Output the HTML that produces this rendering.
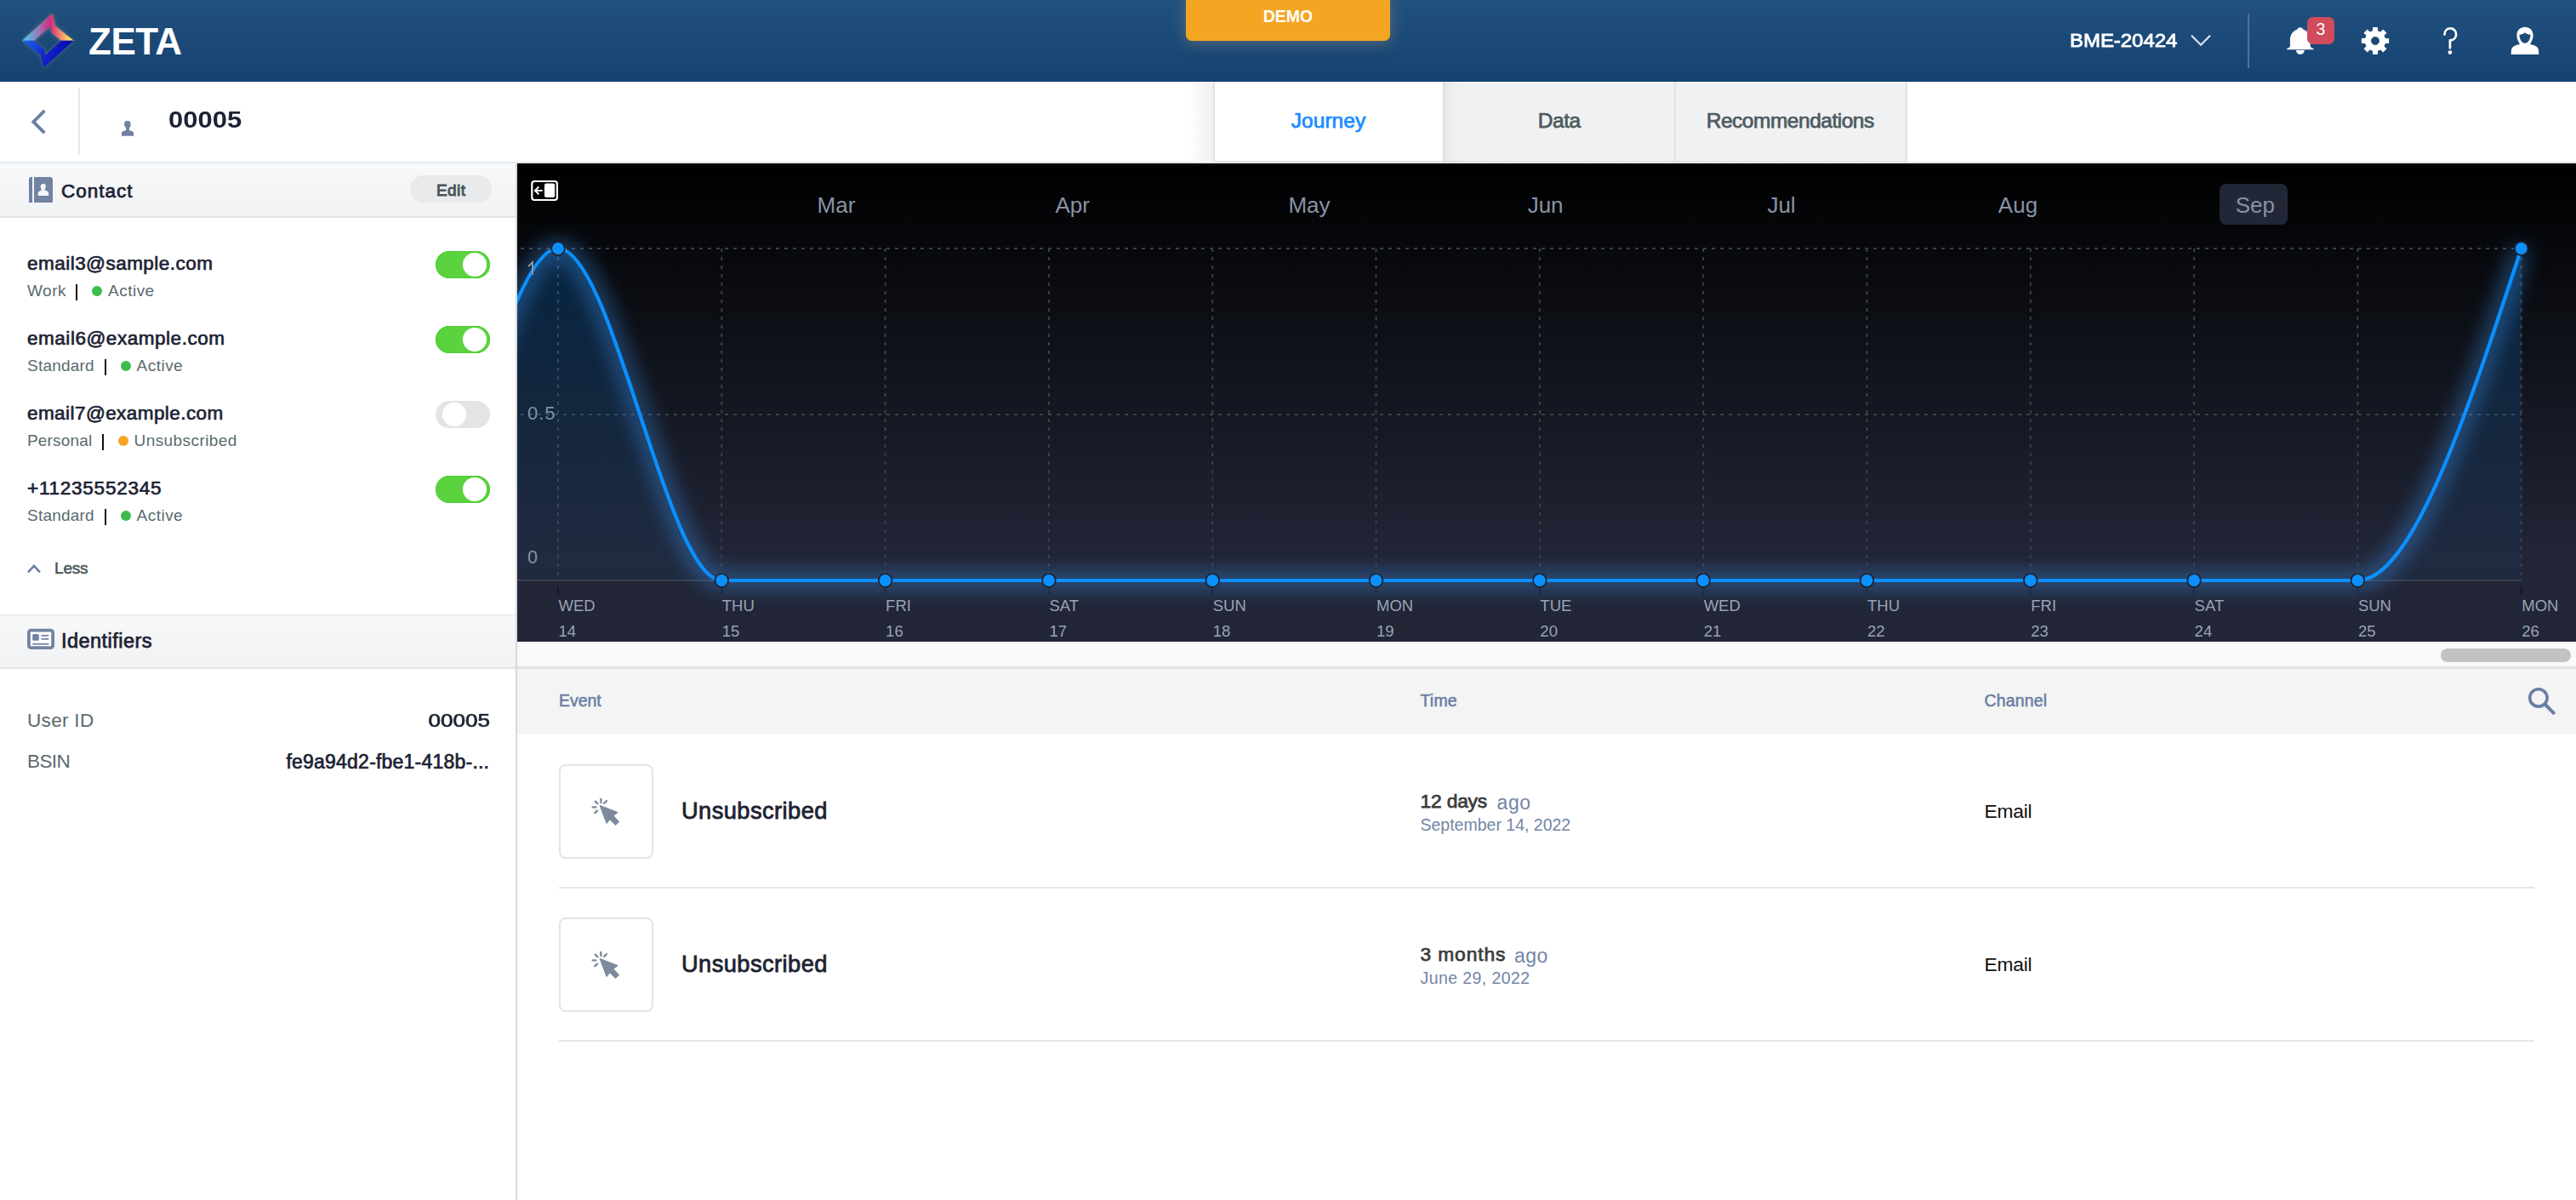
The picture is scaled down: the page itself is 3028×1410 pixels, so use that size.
<!DOCTYPE html>
<html><head><meta charset="utf-8"><title>Zeta</title>
<style>
html,body{margin:0;padding:0;}
body{width:3028px;height:1410px;position:relative;overflow:hidden;background:#fff;font-family:"Liberation Sans", sans-serif;}
.t{position:absolute;white-space:nowrap;}
.r{position:absolute;display:block;}
</style></head><body>
<div class="r" style="left:0px;top:0px;width:3028px;height:95px;background:linear-gradient(180deg,#21517f 0%,#164271 100%);"></div>
<div class="r" style="left:0px;top:95px;width:3028px;height:1px;background:#0b3a6d;"></div>
<svg class="r" style="left:20px;top:10px" width="75" height="75" viewBox="0 0 1200 1200">
<defs>
<linearGradient id="lgTop" x1="95" y1="0" x2="1065" y2="0" gradientUnits="userSpaceOnUse">
<stop offset="0" stop-color="#3fd4ff"/><stop offset="0.32" stop-color="#9a78b8"/><stop offset="0.55" stop-color="#d42a7c"/><stop offset="0.75" stop-color="#f08a70"/><stop offset="1" stop-color="#ffff55"/></linearGradient>
<linearGradient id="lgBot" x1="95" y1="605" x2="1065" y2="900" gradientUnits="userSpaceOnUse">
<stop offset="0" stop-color="#1d6ae8"/><stop offset="0.5" stop-color="#1024c8"/><stop offset="1" stop-color="#0800a8"/></linearGradient>
<filter id="lglow" x="-20%" y="-20%" width="140%" height="140%"><feGaussianBlur stdDeviation="34"/></filter>
</defs>
<g filter="url(#lglow)" opacity="0.35"><polygon points="95,605 665,95 715,325 1065,605 830,605 655,455 625,335 320,605" fill="#f0e6a0"/><polygon points="95,605 320,605 510,770 535,880 830,605 1065,605 500,1110 445,880" fill="#c8c8a0"/></g>
<polygon points="95,605 665,95 715,325 1065,605 830,605 655,455 625,335 320,605" fill="url(#lgTop)"/>
<polygon points="95,605 320,605 510,770 535,880 830,605 1065,605 500,1110 445,880" fill="url(#lgBot)"/>
</svg>
<div class="t" style="left:104.00px;top:26.75px;font-size:44px;line-height:44px;font-weight:700;color:#fff;letter-spacing:-0.5px;">ZETA</div>
<div class="r" style="left:1394px;top:0px;width:240px;height:48px;background:#f4a623;border-radius:0 0 7px 7px;box-shadow:0 2px 16px 2px rgba(150,140,120,0.42);"></div>
<div class="t" style="left:1414.00px;width:200px;text-align:center;top:9.99px;font-size:19.5px;line-height:19.5px;font-weight:700;color:#fff;">DEMO</div>
<div class="t" style="left:2433.00px;top:36.50px;font-size:22.2px;line-height:22.2px;font-weight:400;color:#fff;-webkit-text-stroke:0.85px #fff;transform:scaleX(1.0783);transform-origin:0 50%;">BME-20424</div>
<svg class="r" style="left:2570px;top:35px" width="34" height="26" viewBox="2570 35 34 26"><polyline points="2576,41.7 2587,52.7 2598,41.7" fill="none" stroke="#d9e2ec" stroke-width="2.3"/></svg>
<div class="r" style="left:2642px;top:16px;width:2px;height:64px;background:#4f7399;"></div>
<svg class="r" style="left:2680px;top:20px" width="150" height="50" viewBox="2680 20 150 50">
<path d="M2703.9,32.2 c1.6,0 2.6,0.9 3.2,2.2 c5.2,1.6 8.6,6.2 8.6,12.8 l0,6.6 c0,1.6 1.2,2.6 4.2,3.6 l0,0.9 l-32,0 l0,-0.9 c3,-1 4,-2 4,-3.6 l0,-6.6 c0,-6.6 3.4,-11.2 8.6,-12.8 c0.6,-1.3 1.6,-2.2 3.4,-2.2 z" fill="#fff"/>
<path d="M2699,59 l9.8,0 c0,2.8 -2.2,4.9 -4.9,4.9 c-2.7,0 -4.9,-2.1 -4.9,-4.9 z" fill="#fff"/>
<g transform="translate(2792,47.9)">
<path d="M-3,-16 h6 v4.3 a12,12 0 0 1 3.2,1.35 l3.05,-3.05 l4.25,4.25 l-3.05,3.05 a12,12 0 0 1 1.35,3.2 h4.3 v6 h-4.3 a12,12 0 0 1 -1.35,3.2 l3.05,3.05 l-4.25,4.25 l-3.05,-3.05 a12,12 0 0 1 -3.2,1.35 v4.3 h-6 v-4.3 a12,12 0 0 1 -3.2,-1.35 l-3.05,3.05 l-4.25,-4.25 l3.05,-3.05 a12,12 0 0 1 -1.35,-3.2 h-4.3 v-6 h4.3 a12,12 0 0 1 1.35,-3.2 l-3.05,-3.05 l4.25,-4.25 l3.05,3.05 a12,12 0 0 1 3.2,-1.35 z M0,-4.9 a4.9,4.9 0 1 0 0.01,0 z" fill="#fff" fill-rule="evenodd"/>
</g>
</svg>
<div class="r" style="left:2712px;top:20px;width:32px;height:32px;background:#d04b5c;border-radius:6.5px;"></div>
<div class="t" style="left:2713.00px;width:30px;text-align:center;top:24.59px;font-size:19.5px;line-height:19.5px;font-weight:400;color:#fff;">3</div>
<svg class="r" style="left:2860px;top:20px" width="40" height="50" viewBox="2860 20 40 50">
<path d="M2873.5,40.6 c0,-4.2 2.9,-7.2 6.8,-7.2 c3.9,0 6.8,3 6.8,7 c0,3.6 -2.6,6.3 -6.3,6.9 l-0.9,0.2 l0,9" fill="none" stroke="#fff" stroke-width="2.7" stroke-linecap="round"/>
<circle cx="2879.9" cy="61.6" r="2.4" fill="#fff"/>
</svg>
<svg class="r" style="left:2945px;top:25px" width="45" height="45" viewBox="2945 25 45 45">
<path d="M2968,31.7 c5.2,0 9.6,3.6 9.6,9.5 c0,2.5 -0.5,4.6 -1.4,6.5 c-0.8,1.6 -1.4,2.9 -2.2,4.2 c4.6,1 10.2,2.2 10.2,8.2 l0,3.9 l-32.4,0 l0,-3.9 c0,-6 5.6,-7.2 10.2,-8.2 c-0.8,-1.3 -1.4,-2.6 -2.2,-4.2 c-0.9,-1.9 -1.4,-4 -1.4,-6.5 c0,-5.9 4.4,-9.5 9.6,-9.5 z M2968,38.2 c-1.6,1.6 -4,2.2 -6.6,2.6 c0.2,4.5 2.4,10 6.6,10 c4.2,0 6.4,-5.5 6.6,-10 c-2.6,-0.4 -5,-1 -6.6,-2.6 z" fill="#fff" fill-rule="evenodd"/>
</svg>
<div class="r" style="left:0px;top:96px;width:3028px;height:94px;background:#fff;"></div>
<div class="r" style="left:0px;top:190px;width:3028px;height:2px;background:#e3eaee;"></div>
<svg class="r" style="left:30px;top:124px" width="30" height="40" viewBox="30 124 30 40"><polyline points="52.3,130.2 39.3,143.2 52.3,156.2" fill="none" stroke="#6b7ea3" stroke-width="3.8"/></svg>
<div class="r" style="left:92px;top:103px;width:2px;height:79px;background:#e3e9ee;"></div>
<svg class="r" style="left:138px;top:138px" width="24" height="26" viewBox="138 138 24 26">
<path d="M146.8,143 c0.6,-0.9 1.8,-1 3.2,-1 c1.6,0 3.2,0.5 3.4,2.2 l0.2,3 c-0.1,1.4 -0.6,2.4 -1.6,2.8 l0,2.9 l3.4,1.4 c1.1,0.6 1.7,1.2 1.7,2 l0,3.45 l-14.2,0 l0,-3.45 c0,-0.8 0.6,-1.4 1.7,-2 l3.4,-1.4 l0,-2.9 c-1,-0.4 -1.6,-1.6 -1.6,-2.8 c-0.4,-0.3 -0.5,-1 -0.2,-1.5 c-0.3,-0.3 -0.3,-1 0,-1.4 z" fill="#7282a3"/>
</svg>
<div class="t" style="left:198.00px;top:128.14px;font-size:27px;line-height:27px;font-weight:700;color:#1c2333;transform:scaleX(1.1479);transform-origin:0 50%;">00005</div>
<div class="r" style="left:1396px;top:96px;width:30px;height:93px;background:linear-gradient(90deg,rgba(0,0,0,0),rgba(0,0,0,0.06));"></div>
<div class="r" style="left:1426px;top:96px;width:2px;height:93px;background:#e2e2e2;"></div>
<div class="r" style="left:1428px;top:96px;width:268px;height:93px;background:#fff;"></div>
<div class="r" style="left:1696px;top:96px;width:272px;height:93px;background:linear-gradient(90deg,#e6e7e9 0px,#eeeff1 14px,#f0f1f3 26px,#f0f1f3 100%);"></div>
<div class="r" style="left:1696px;top:96px;width:1.5px;height:93px;background:#dedede;"></div>
<div class="r" style="left:1968px;top:96px;width:2px;height:93px;background:#e2e2e2;"></div>
<div class="r" style="left:1970px;top:96px;width:270px;height:93px;background:#f0f1f3;"></div>
<div class="r" style="left:2240px;top:96px;width:2px;height:93px;background:#e2e2e2;"></div>
<div class="r" style="left:1426px;top:189px;width:816px;height:2px;background:#e3e3e3;"></div>
<div class="t" style="left:1431.52px;width:260px;text-align:center;top:130.26px;font-size:24.5px;line-height:24.5px;font-weight:400;color:#1a8cff;letter-spacing:0.046px;-webkit-text-stroke:0.75px #1a8cff;">Journey</div>
<div class="t" style="left:1702.78px;width:260px;text-align:center;top:130.26px;font-size:24.5px;line-height:24.5px;font-weight:400;color:#4d5a60;letter-spacing:-0.439px;-webkit-text-stroke:0.75px #4d5a60;">Data</div>
<div class="t" style="left:1969.26px;width:270px;text-align:center;top:130.26px;font-size:24.5px;line-height:24.5px;font-weight:400;color:#4d5a60;letter-spacing:-0.488px;-webkit-text-stroke:0.75px #4d5a60;">Recommendations</div>
<div class="r" style="left:0px;top:192px;width:606px;height:1218px;background:#fff;"></div>
<div class="r" style="left:606px;top:192px;width:2px;height:1218px;background:#d9d9d9;"></div>
<div class="r" style="left:0px;top:192px;width:606px;height:62px;background:linear-gradient(180deg,#f8f9fa,#f1f2f4);"></div>
<div class="r" style="left:0px;top:254px;width:606px;height:1.5px;background:#dfe3e6;"></div>
<svg class="r" style="left:30px;top:204px" width="36" height="38" viewBox="30 204 36 38">
<path d="M36.5,208 l1.5,0 l0,30 l-4,0 l0,-27.5 c0,-1.4 1.1,-2.5 2.5,-2.5 z" fill="#7282a3"/>
<path d="M40,208 l19,0 c1.6,0 3,1.4 3,3 l0,27 l-22,0 z" fill="#7282a3"/>
<path d="M50.8,215.7 c1.7,0 2.9,0.9 3,2.5 c0.1,1.5 -0.3,3.2 -1.2,4.6 l-0.2,0.5 c1.9,0.7 4.6,1.5 4.7,3.2 l0,3.5 l-12.4,0 l0,-3.2 c0.3,-1.8 2.6,-2.5 4.4,-3.5 c-0.9,-1.2 -1.3,-2.6 -1.3,-3.9 c-0.5,-0.8 -0.2,-1.7 0.4,-2.1 c0.6,-1.1 1.5,-1.6 2.6,-1.6 z" fill="#f3f4f6"/>
</svg>
<div class="t" style="left:72.00px;top:213.95px;font-size:22.5px;line-height:22.5px;font-weight:400;color:#1c2333;letter-spacing:0.984px;-webkit-text-stroke:0.75px #1c2333;">Contact</div>
<div class="r" style="left:482px;top:206px;width:96px;height:32px;background:#e9eaeb;border-radius:16px;"></div>
<div class="t" style="left:485.25px;width:90px;text-align:center;top:213.91px;font-size:19px;line-height:19px;font-weight:400;color:#48565b;letter-spacing:0.5px;-webkit-text-stroke:0.95px #48565b;">Edit</div>
<div class="t" style="left:32.00px;top:299.35px;font-size:22.5px;line-height:22.5px;font-weight:400;color:#1c2333;letter-spacing:0.474px;-webkit-text-stroke:0.7px #1c2333;">email3@sample.com</div>
<div class="t" style="left:32.00px;top:332.31px;font-size:19px;line-height:19px;font-weight:400;color:#596a6e;letter-spacing:0.505px;">Work</div>
<div class="r" style="left:88.5px;top:334.4px;width:2.2px;height:19px;background:#111;"></div>
<div class="r" style="left:108px;top:336.4px;width:12px;height:12px;background:#3dbb4f;border-radius:50%;"></div>
<div class="t" style="left:127.00px;top:332.31px;font-size:19px;line-height:19px;font-weight:400;color:#596a6e;letter-spacing:0.49px;">Active</div>
<div class="r" style="left:512px;top:295px;width:64px;height:32px;background:#5bd33f;border-radius:16px;box-shadow:inset 0 0 0 1px #4fcd33;"></div>
<div class="r" style="left:543.75px;top:297px;width:28px;height:28px;background:#fff;border-radius:50%;"></div>
<div class="t" style="left:32.00px;top:387.35px;font-size:22.5px;line-height:22.5px;font-weight:400;color:#1c2333;letter-spacing:0.533px;-webkit-text-stroke:0.7px #1c2333;">email6@example.com</div>
<div class="t" style="left:32.00px;top:420.31px;font-size:19px;line-height:19px;font-weight:400;color:#596a6e;letter-spacing:0.225px;">Standard</div>
<div class="r" style="left:123px;top:422.4px;width:2.2px;height:19px;background:#111;"></div>
<div class="r" style="left:142px;top:424.4px;width:12px;height:12px;background:#3dbb4f;border-radius:50%;"></div>
<div class="t" style="left:160.50px;top:420.31px;font-size:19px;line-height:19px;font-weight:400;color:#596a6e;letter-spacing:0.49px;">Active</div>
<div class="r" style="left:512px;top:383px;width:64px;height:32px;background:#5bd33f;border-radius:16px;box-shadow:inset 0 0 0 1px #4fcd33;"></div>
<div class="r" style="left:543.75px;top:385px;width:28px;height:28px;background:#fff;border-radius:50%;"></div>
<div class="t" style="left:32.00px;top:475.35px;font-size:22.5px;line-height:22.5px;font-weight:400;color:#1c2333;letter-spacing:0.433px;-webkit-text-stroke:0.7px #1c2333;">email7@example.com</div>
<div class="t" style="left:32.00px;top:508.31px;font-size:19px;line-height:19px;font-weight:400;color:#596a6e;letter-spacing:0.171px;">Personal</div>
<div class="r" style="left:120px;top:510.4px;width:2.2px;height:19px;background:#111;"></div>
<div class="r" style="left:139px;top:512.4px;width:12px;height:12px;background:#f4a623;border-radius:50%;"></div>
<div class="t" style="left:157.60px;top:508.31px;font-size:19px;line-height:19px;font-weight:400;color:#596a6e;letter-spacing:0.412px;">Unsubscribed</div>
<div class="r" style="left:512px;top:471px;width:64px;height:32px;background:#e4e4e4;border-radius:16px;"></div>
<div class="r" style="left:520px;top:473px;width:28px;height:28px;background:#fff;border-radius:50%;"></div>
<div class="t" style="left:32.00px;top:563.35px;font-size:22.5px;line-height:22.5px;font-weight:400;color:#1c2333;letter-spacing:0.761px;-webkit-text-stroke:0.7px #1c2333;">+11235552345</div>
<div class="t" style="left:32.00px;top:596.31px;font-size:19px;line-height:19px;font-weight:400;color:#596a6e;letter-spacing:0.225px;">Standard</div>
<div class="r" style="left:123px;top:598.4px;width:2.2px;height:19px;background:#111;"></div>
<div class="r" style="left:142px;top:600.4px;width:12px;height:12px;background:#3dbb4f;border-radius:50%;"></div>
<div class="t" style="left:160.50px;top:596.31px;font-size:19px;line-height:19px;font-weight:400;color:#596a6e;letter-spacing:0.49px;">Active</div>
<div class="r" style="left:512px;top:559px;width:64px;height:32px;background:#5bd33f;border-radius:16px;box-shadow:inset 0 0 0 1px #4fcd33;"></div>
<div class="r" style="left:543.75px;top:561px;width:28px;height:28px;background:#fff;border-radius:50%;"></div>
<svg class="r" style="left:28px;top:658px" width="24" height="20" viewBox="28 658 24 20"><polyline points="33,672.3 40,664.8 47,672.3" fill="none" stroke="#6b7ea3" stroke-width="2.6"/></svg>
<div class="t" style="left:64.00px;top:657.91px;font-size:19px;line-height:19px;font-weight:400;color:#4d5a60;letter-spacing:-0.18px;-webkit-text-stroke:0.6px #4d5a60;">Less</div>
<div class="r" style="left:0px;top:722px;width:606px;height:1px;background:#e3e6e9;"></div>
<div class="r" style="left:0px;top:723px;width:606px;height:61px;background:linear-gradient(180deg,#f7f8f9,#f1f2f4);"></div>
<div class="r" style="left:0px;top:784px;width:606px;height:2px;background:#e1e3e6;"></div>
<svg class="r" style="left:30px;top:735px" width="36" height="32" viewBox="30 735 36 32">
<rect x="33.9" y="740.7" width="28.2" height="20.5" rx="2.6" fill="#fff" stroke="#7282a3" stroke-width="3.8"/>
<rect x="38.2" y="745" width="7.6" height="7.8" rx="1.6" fill="#7282a3"/>
<rect x="48.5" y="745.9" width="8.8" height="1.8" fill="#7282a3"/>
<rect x="48.5" y="749.9" width="8.8" height="1.8" fill="#7282a3"/>
<rect x="38.3" y="755.8" width="19" height="1.8" fill="#7282a3"/>
</svg>
<div class="t" style="left:72.00px;top:741.50px;font-size:23.5px;line-height:23.5px;font-weight:400;color:#1c2333;letter-spacing:0.456px;-webkit-text-stroke:0.75px #1c2333;">Identifiers</div>
<div class="t" style="left:32.00px;top:835.95px;font-size:22.5px;line-height:22.5px;font-weight:400;color:#596a6e;letter-spacing:0.322px;">User ID</div>
<div class="t" style="left:375.50px;width:200.00px;text-align:right;top:835.95px;font-size:22.5px;line-height:22.5px;font-weight:400;color:#1c2333;-webkit-text-stroke:0.7px #1c2333;transform:scaleX(1.1586);transform-origin:100% 50%;">00005</div>
<div class="t" style="left:32.00px;top:884.35px;font-size:22.5px;line-height:22.5px;font-weight:400;color:#596a6e;letter-spacing:-0.605px;">BSIN</div>
<div class="t" style="left:275.00px;width:300.21px;text-align:right;top:883.93px;font-size:23px;line-height:23px;font-weight:400;color:#1c2333;letter-spacing:0.214px;-webkit-text-stroke:0.7px #1c2333;">fe9a94d2-fbe1-418b-...</div>
<svg class="r" style="left:608px;top:192px" width="2420" height="562" viewBox="608 192 2420 562">
<defs>
<linearGradient id="cbg" x1="0" y1="192" x2="0" y2="754" gradientUnits="userSpaceOnUse">
<stop offset="0" stop-color="#000000"/><stop offset="0.15" stop-color="#06070a"/><stop offset="0.5" stop-color="#141721"/><stop offset="0.82" stop-color="#212536"/><stop offset="1" stop-color="#222637"/></linearGradient>
<linearGradient id="carea" x1="0" y1="292" x2="0" y2="690" gradientUnits="userSpaceOnUse">
<stop offset="0" stop-color="#0a8cff" stop-opacity="0.22"/><stop offset="0.6" stop-color="#0a8cff" stop-opacity="0.1"/><stop offset="1" stop-color="#0a8cff" stop-opacity="0.04"/></linearGradient>
<filter id="glow" x="-5%" y="-40%" width="110%" height="180%"><feGaussianBlur stdDeviation="12"/></filter>
</defs>
<rect x="608" y="192" width="2420" height="562" fill="url(#cbg)"/>
<rect x="2609" y="216" width="80" height="48" rx="8" fill="#222737"/>
<line x1="612" y1="292.0" x2="2964" y2="292.0" stroke="#3a4146" stroke-width="2" stroke-dasharray="4 6"/>
<line x1="612" y1="487" x2="2964" y2="487" stroke="#3a4146" stroke-width="2" stroke-dasharray="4 6"/>
<line x1="656.00" y1="292.0" x2="656.00" y2="682.0" stroke="#3a4146" stroke-width="2" stroke-dasharray="4 6"/>
<line x1="848.31" y1="292.0" x2="848.31" y2="682.0" stroke="#3a4146" stroke-width="2" stroke-dasharray="4 6"/>
<line x1="1040.62" y1="292.0" x2="1040.62" y2="682.0" stroke="#3a4146" stroke-width="2" stroke-dasharray="4 6"/>
<line x1="1232.93" y1="292.0" x2="1232.93" y2="682.0" stroke="#3a4146" stroke-width="2" stroke-dasharray="4 6"/>
<line x1="1425.24" y1="292.0" x2="1425.24" y2="682.0" stroke="#3a4146" stroke-width="2" stroke-dasharray="4 6"/>
<line x1="1617.55" y1="292.0" x2="1617.55" y2="682.0" stroke="#3a4146" stroke-width="2" stroke-dasharray="4 6"/>
<line x1="1809.86" y1="292.0" x2="1809.86" y2="682.0" stroke="#3a4146" stroke-width="2" stroke-dasharray="4 6"/>
<line x1="2002.17" y1="292.0" x2="2002.17" y2="682.0" stroke="#3a4146" stroke-width="2" stroke-dasharray="4 6"/>
<line x1="2194.48" y1="292.0" x2="2194.48" y2="682.0" stroke="#3a4146" stroke-width="2" stroke-dasharray="4 6"/>
<line x1="2386.79" y1="292.0" x2="2386.79" y2="682.0" stroke="#3a4146" stroke-width="2" stroke-dasharray="4 6"/>
<line x1="2579.10" y1="292.0" x2="2579.10" y2="682.0" stroke="#3a4146" stroke-width="2" stroke-dasharray="4 6"/>
<line x1="2771.41" y1="292.0" x2="2771.41" y2="682.0" stroke="#3a4146" stroke-width="2" stroke-dasharray="4 6"/>
<line x1="2963.72" y1="292.0" x2="2963.72" y2="682.0" stroke="#3a4146" stroke-width="2" stroke-dasharray="4 6"/>
<line x1="608" y1="682.0" x2="2964" y2="682.0" stroke="#3a3f4a" stroke-width="2"/>
<line x1="656.00" y1="690" x2="656.00" y2="698" stroke="#14171f" stroke-width="2"/>
<line x1="848.31" y1="690" x2="848.31" y2="698" stroke="#14171f" stroke-width="2"/>
<line x1="1040.62" y1="690" x2="1040.62" y2="698" stroke="#14171f" stroke-width="2"/>
<line x1="1232.93" y1="690" x2="1232.93" y2="698" stroke="#14171f" stroke-width="2"/>
<line x1="1425.24" y1="690" x2="1425.24" y2="698" stroke="#14171f" stroke-width="2"/>
<line x1="1617.55" y1="690" x2="1617.55" y2="698" stroke="#14171f" stroke-width="2"/>
<line x1="1809.86" y1="690" x2="1809.86" y2="698" stroke="#14171f" stroke-width="2"/>
<line x1="2002.17" y1="690" x2="2002.17" y2="698" stroke="#14171f" stroke-width="2"/>
<line x1="2194.48" y1="690" x2="2194.48" y2="698" stroke="#14171f" stroke-width="2"/>
<line x1="2386.79" y1="690" x2="2386.79" y2="698" stroke="#14171f" stroke-width="2"/>
<line x1="2579.10" y1="690" x2="2579.10" y2="698" stroke="#14171f" stroke-width="2"/>
<line x1="2771.41" y1="690" x2="2771.41" y2="698" stroke="#14171f" stroke-width="2"/>
<line x1="2963.72" y1="690" x2="2963.72" y2="698" stroke="#14171f" stroke-width="2"/>
</svg>
<div class="t" style="left:620.00px;top:474.87px;font-size:22px;line-height:22px;font-weight:400;color:#8a93a2;letter-spacing:1.003px;">0.5</div>
<div class="t" style="left:620.00px;top:644.80px;font-size:21.5px;line-height:21.5px;font-weight:400;color:#8a93a2;">0</div>
<svg class="r" style="left:608px;top:192px" width="2420" height="562" viewBox="608 192 2420 562">
<path d="M271.38,682.00 C335.48,682.00 399.59,682.00 463.69,682.00 C527.79,682.00 591.90,292.00 656.00,292.00 C720.10,292.00 784.21,682.00 848.31,682.00 C912.41,682.00 976.52,682.00 1040.62,682.00 C1104.72,682.00 1168.83,682.00 1232.93,682.00 C1297.03,682.00 1361.14,682.00 1425.24,682.00 C1489.34,682.00 1553.45,682.00 1617.55,682.00 C1681.65,682.00 1745.76,682.00 1809.86,682.00 C1873.96,682.00 1938.07,682.00 2002.17,682.00 C2066.27,682.00 2130.38,682.00 2194.48,682.00 C2258.58,682.00 2322.69,682.00 2386.79,682.00 C2450.89,682.00 2515.00,682.00 2579.10,682.00 C2643.20,682.00 2707.31,682.00 2771.41,682.00 C2835.51,682.00 2899.62,487.00 2963.72,292.00 L2963.72,682.0 L271.38,682.0 Z" fill="url(#carea)"/>
<path d="M271.38,682.00 C335.48,682.00 399.59,682.00 463.69,682.00 C527.79,682.00 591.90,292.00 656.00,292.00 C720.10,292.00 784.21,682.00 848.31,682.00 C912.41,682.00 976.52,682.00 1040.62,682.00 C1104.72,682.00 1168.83,682.00 1232.93,682.00 C1297.03,682.00 1361.14,682.00 1425.24,682.00 C1489.34,682.00 1553.45,682.00 1617.55,682.00 C1681.65,682.00 1745.76,682.00 1809.86,682.00 C1873.96,682.00 1938.07,682.00 2002.17,682.00 C2066.27,682.00 2130.38,682.00 2194.48,682.00 C2258.58,682.00 2322.69,682.00 2386.79,682.00 C2450.89,682.00 2515.00,682.00 2579.10,682.00 C2643.20,682.00 2707.31,682.00 2771.41,682.00 C2835.51,682.00 2899.62,487.00 2963.72,292.00" fill="none" stroke="#3a8fe8" stroke-width="15" opacity="0.62" filter="url(#glow)"/>
<path d="M271.38,682.00 C335.48,682.00 399.59,682.00 463.69,682.00 C527.79,682.00 591.90,292.00 656.00,292.00 C720.10,292.00 784.21,682.00 848.31,682.00 C912.41,682.00 976.52,682.00 1040.62,682.00 C1104.72,682.00 1168.83,682.00 1232.93,682.00 C1297.03,682.00 1361.14,682.00 1425.24,682.00 C1489.34,682.00 1553.45,682.00 1617.55,682.00 C1681.65,682.00 1745.76,682.00 1809.86,682.00 C1873.96,682.00 1938.07,682.00 2002.17,682.00 C2066.27,682.00 2130.38,682.00 2194.48,682.00 C2258.58,682.00 2322.69,682.00 2386.79,682.00 C2450.89,682.00 2515.00,682.00 2579.10,682.00 C2643.20,682.00 2707.31,682.00 2771.41,682.00 C2835.51,682.00 2899.62,487.00 2963.72,292.00" fill="none" stroke="#0a90ff" stroke-width="4.2"/>
<circle cx="656.00" cy="292.00" r="7.8" fill="#0a90ff" stroke="#20222e" stroke-width="1.8"/>
<circle cx="848.31" cy="682.00" r="7.8" fill="#0a90ff" stroke="#20222e" stroke-width="1.8"/>
<circle cx="1040.62" cy="682.00" r="7.8" fill="#0a90ff" stroke="#20222e" stroke-width="1.8"/>
<circle cx="1232.93" cy="682.00" r="7.8" fill="#0a90ff" stroke="#20222e" stroke-width="1.8"/>
<circle cx="1425.24" cy="682.00" r="7.8" fill="#0a90ff" stroke="#20222e" stroke-width="1.8"/>
<circle cx="1617.55" cy="682.00" r="7.8" fill="#0a90ff" stroke="#20222e" stroke-width="1.8"/>
<circle cx="1809.86" cy="682.00" r="7.8" fill="#0a90ff" stroke="#20222e" stroke-width="1.8"/>
<circle cx="2002.17" cy="682.00" r="7.8" fill="#0a90ff" stroke="#20222e" stroke-width="1.8"/>
<circle cx="2194.48" cy="682.00" r="7.8" fill="#0a90ff" stroke="#20222e" stroke-width="1.8"/>
<circle cx="2386.79" cy="682.00" r="7.8" fill="#0a90ff" stroke="#20222e" stroke-width="1.8"/>
<circle cx="2579.10" cy="682.00" r="7.8" fill="#0a90ff" stroke="#20222e" stroke-width="1.8"/>
<circle cx="2771.41" cy="682.00" r="7.8" fill="#0a90ff" stroke="#20222e" stroke-width="1.8"/>
<circle cx="2963.72" cy="292.00" r="7.8" fill="#0a90ff" stroke="#20222e" stroke-width="1.8"/>
<path d="M621.2,313 L625.9,308.2 L625.9,322.8" fill="none" stroke="#8f97a5" stroke-width="1.9" stroke-linejoin="miter"/>
<rect x="625.3" y="213" width="29.6" height="22" rx="3" fill="none" stroke="#fff" stroke-width="2.2"/>
<rect x="640" y="215.6" width="12.2" height="16.5" rx="2" fill="#fff"/>
<polyline points="633.3,219.5 628.8,223.9 633.5,228.3" fill="none" stroke="#fff" stroke-width="1.9"/>
<line x1="629" y1="223.9" x2="637.7" y2="223.9" stroke="#fff" stroke-width="1.9"/>
</svg>
<div class="t" style="left:923.00px;width:120px;text-align:center;top:227.99px;font-size:26px;line-height:26px;font-weight:400;color:#8892a3;">Mar</div>
<div class="t" style="left:1200.70px;width:120px;text-align:center;top:227.99px;font-size:26px;line-height:26px;font-weight:400;color:#8892a3;">Apr</div>
<div class="t" style="left:1479.00px;width:120px;text-align:center;top:227.99px;font-size:26px;line-height:26px;font-weight:400;color:#8892a3;">May</div>
<div class="t" style="left:1756.60px;width:120px;text-align:center;top:227.99px;font-size:26px;line-height:26px;font-weight:400;color:#8892a3;">Jun</div>
<div class="t" style="left:2034.00px;width:120px;text-align:center;top:227.99px;font-size:26px;line-height:26px;font-weight:400;color:#8892a3;">Jul</div>
<div class="t" style="left:2312.00px;width:120px;text-align:center;top:227.99px;font-size:26px;line-height:26px;font-weight:400;color:#8892a3;">Aug</div>
<div class="t" style="left:2590.80px;width:120px;text-align:center;top:227.99px;font-size:26px;line-height:26px;font-weight:400;color:#8892a3;">Sep</div>
<div class="t" style="left:656.50px;top:702.84px;font-size:18.5px;line-height:18.5px;font-weight:400;color:#99a3b5;">WED</div>
<div class="t" style="left:656.50px;top:733.14px;font-size:18.5px;line-height:18.5px;font-weight:400;color:#99a3b5;">14</div>
<div class="t" style="left:848.81px;top:702.84px;font-size:18.5px;line-height:18.5px;font-weight:400;color:#99a3b5;">THU</div>
<div class="t" style="left:848.81px;top:733.14px;font-size:18.5px;line-height:18.5px;font-weight:400;color:#99a3b5;">15</div>
<div class="t" style="left:1041.12px;top:702.84px;font-size:18.5px;line-height:18.5px;font-weight:400;color:#99a3b5;">FRI</div>
<div class="t" style="left:1041.12px;top:733.14px;font-size:18.5px;line-height:18.5px;font-weight:400;color:#99a3b5;">16</div>
<div class="t" style="left:1233.43px;top:702.84px;font-size:18.5px;line-height:18.5px;font-weight:400;color:#99a3b5;">SAT</div>
<div class="t" style="left:1233.43px;top:733.14px;font-size:18.5px;line-height:18.5px;font-weight:400;color:#99a3b5;">17</div>
<div class="t" style="left:1425.74px;top:702.84px;font-size:18.5px;line-height:18.5px;font-weight:400;color:#99a3b5;">SUN</div>
<div class="t" style="left:1425.74px;top:733.14px;font-size:18.5px;line-height:18.5px;font-weight:400;color:#99a3b5;">18</div>
<div class="t" style="left:1618.05px;top:702.84px;font-size:18.5px;line-height:18.5px;font-weight:400;color:#99a3b5;">MON</div>
<div class="t" style="left:1618.05px;top:733.14px;font-size:18.5px;line-height:18.5px;font-weight:400;color:#99a3b5;">19</div>
<div class="t" style="left:1810.36px;top:702.84px;font-size:18.5px;line-height:18.5px;font-weight:400;color:#99a3b5;">TUE</div>
<div class="t" style="left:1810.36px;top:733.14px;font-size:18.5px;line-height:18.5px;font-weight:400;color:#99a3b5;">20</div>
<div class="t" style="left:2002.67px;top:702.84px;font-size:18.5px;line-height:18.5px;font-weight:400;color:#99a3b5;">WED</div>
<div class="t" style="left:2002.67px;top:733.14px;font-size:18.5px;line-height:18.5px;font-weight:400;color:#99a3b5;">21</div>
<div class="t" style="left:2194.98px;top:702.84px;font-size:18.5px;line-height:18.5px;font-weight:400;color:#99a3b5;">THU</div>
<div class="t" style="left:2194.98px;top:733.14px;font-size:18.5px;line-height:18.5px;font-weight:400;color:#99a3b5;">22</div>
<div class="t" style="left:2387.29px;top:702.84px;font-size:18.5px;line-height:18.5px;font-weight:400;color:#99a3b5;">FRI</div>
<div class="t" style="left:2387.29px;top:733.14px;font-size:18.5px;line-height:18.5px;font-weight:400;color:#99a3b5;">23</div>
<div class="t" style="left:2579.60px;top:702.84px;font-size:18.5px;line-height:18.5px;font-weight:400;color:#99a3b5;">SAT</div>
<div class="t" style="left:2579.60px;top:733.14px;font-size:18.5px;line-height:18.5px;font-weight:400;color:#99a3b5;">24</div>
<div class="t" style="left:2771.91px;top:702.84px;font-size:18.5px;line-height:18.5px;font-weight:400;color:#99a3b5;">SUN</div>
<div class="t" style="left:2771.91px;top:733.14px;font-size:18.5px;line-height:18.5px;font-weight:400;color:#99a3b5;">25</div>
<div class="t" style="left:2964.22px;top:702.84px;font-size:18.5px;line-height:18.5px;font-weight:400;color:#99a3b5;">MON</div>
<div class="t" style="left:2964.22px;top:733.14px;font-size:18.5px;line-height:18.5px;font-weight:400;color:#99a3b5;">26</div>
<div class="r" style="left:608px;top:754px;width:2420px;height:28px;background:#fafafa;"></div>
<div class="r" style="left:608px;top:755px;width:2420px;height:1px;background:#f1f1f1;"></div>
<div class="r" style="left:608px;top:782px;width:2420px;height:1.5px;background:#ebebeb;"></div>
<div class="r" style="left:608px;top:783.5px;width:2420px;height:2.5px;background:#e2e2e2;"></div>
<div class="r" style="left:2869px;top:762px;width:153px;height:16px;background:#c2c2c2;border-radius:8px;"></div>
<div class="r" style="left:608px;top:786px;width:2420px;height:77px;background:#f4f4f4;"></div>
<div class="t" style="left:657.00px;top:814.24px;font-size:19.5px;line-height:19.5px;font-weight:400;color:#6b7ea3;letter-spacing:-0.056px;-webkit-text-stroke:0.55px #6b7ea3;">Event</div>
<div class="t" style="left:1669.50px;top:813.79px;font-size:19.5px;line-height:19.5px;font-weight:400;color:#6b7ea3;letter-spacing:0.18px;-webkit-text-stroke:0.55px #6b7ea3;">Time</div>
<div class="t" style="left:2332.50px;top:813.79px;font-size:19.5px;line-height:19.5px;font-weight:400;color:#6b7ea3;letter-spacing:0.168px;-webkit-text-stroke:0.55px #6b7ea3;">Channel</div>
<svg class="r" style="left:2960px;top:800px" width="50" height="45" viewBox="2960 800 50 45">
<circle cx="2983.9" cy="819.9" r="10.2" fill="none" stroke="#6b7ea3" stroke-width="3.6"/>
<line x1="2991" y1="827" x2="3002.8" y2="838.8" stroke="#6b7ea3" stroke-width="4"/>
</svg>
<div class="r" style="left:608px;top:863px;width:2420px;height:547px;background:#fff;"></div>
<div class="r" style="left:656.5px;top:898px;width:111px;height:111px;border:2px solid #e4e4e4;border-radius:8px;box-sizing:border-box;background:#fff;"></div>
<svg class="r" style="left:690px;top:930px" width="45" height="45" viewBox="690 930 45 45">
<polygon points="705,946.3 726.2,954.6 721.1,958.4 727.6,965.5 723.7,969.5 716.8,962.9 713,967.6" fill="#7d8a9e" stroke="#7d8a9e" stroke-width="1" stroke-linejoin="round"/>
<g stroke="#7d8a9e" stroke-width="2.4" stroke-linecap="round">
<line x1="706.3" y1="939" x2="706.5" y2="943"/>
<line x1="713" y1="941" x2="710.2" y2="943.8"/>
<line x1="699.8" y1="941.7" x2="702.3" y2="944.1"/>
<line x1="696.8" y1="948.4" x2="700.4" y2="948.4"/>
<line x1="702" y1="952.6" x2="699.3" y2="955.2"/>
</g></svg>
<div class="t" style="left:801.00px;top:938.89px;font-size:27.3px;line-height:27.3px;font-weight:400;color:#1c2333;letter-spacing:0.409px;-webkit-text-stroke:0.8px #1c2333;">Unsubscribed</div>
<div class="t" style="left:1669.50px;top:930.00px;font-size:22.8px;line-height:22.8px;font-weight:400;color:#3c3c3c;letter-spacing:-0.185px;-webkit-text-stroke:0.75px #3c3c3c;">12 days</div>
<div class="t" style="left:1759.60px;top:931.53px;font-size:23px;line-height:23px;font-weight:400;color:#7385a6;letter-spacing:0.513px;">ago</div>
<div class="t" style="left:1669.50px;top:959.79px;font-size:19.5px;line-height:19.5px;font-weight:400;color:#7385a6;letter-spacing:-0.001px;">September 14, 2022</div>
<div class="t" style="left:2332.50px;top:941.70px;font-size:22.8px;line-height:22.8px;font-weight:400;color:#111;letter-spacing:-0.204px;">Email</div>
<div class="r" style="left:657px;top:1042px;width:2322px;height:2px;background:#e6e6e6;"></div>
<div class="r" style="left:656.5px;top:1078px;width:111px;height:111px;border:2px solid #e4e4e4;border-radius:8px;box-sizing:border-box;background:#fff;"></div>
<svg class="r" style="left:690px;top:1110px" width="45" height="45" viewBox="690 930 45 45">
<polygon points="705,946.3 726.2,954.6 721.1,958.4 727.6,965.5 723.7,969.5 716.8,962.9 713,967.6" fill="#7d8a9e" stroke="#7d8a9e" stroke-width="1" stroke-linejoin="round"/>
<g stroke="#7d8a9e" stroke-width="2.4" stroke-linecap="round">
<line x1="706.3" y1="939" x2="706.5" y2="943"/>
<line x1="713" y1="941" x2="710.2" y2="943.8"/>
<line x1="699.8" y1="941.7" x2="702.3" y2="944.1"/>
<line x1="696.8" y1="948.4" x2="700.4" y2="948.4"/>
<line x1="702" y1="952.6" x2="699.3" y2="955.2"/>
</g></svg>
<div class="t" style="left:801.00px;top:1118.89px;font-size:27.3px;line-height:27.3px;font-weight:400;color:#1c2333;letter-spacing:0.409px;-webkit-text-stroke:0.8px #1c2333;">Unsubscribed</div>
<div class="t" style="left:1669.50px;top:1110.00px;font-size:22.8px;line-height:22.8px;font-weight:400;color:#3c3c3c;letter-spacing:0.867px;-webkit-text-stroke:0.75px #3c3c3c;">3 months</div>
<div class="t" style="left:1780.00px;top:1111.53px;font-size:23px;line-height:23px;font-weight:400;color:#7385a6;letter-spacing:0.513px;">ago</div>
<div class="t" style="left:1669.50px;top:1139.79px;font-size:19.5px;line-height:19.5px;font-weight:400;color:#7385a6;letter-spacing:0.416px;">June 29, 2022</div>
<div class="t" style="left:2332.50px;top:1121.70px;font-size:22.8px;line-height:22.8px;font-weight:400;color:#111;letter-spacing:-0.204px;">Email</div>
<div class="r" style="left:657px;top:1222px;width:2322px;height:2px;background:#e6e6e6;"></div>
</body></html>
